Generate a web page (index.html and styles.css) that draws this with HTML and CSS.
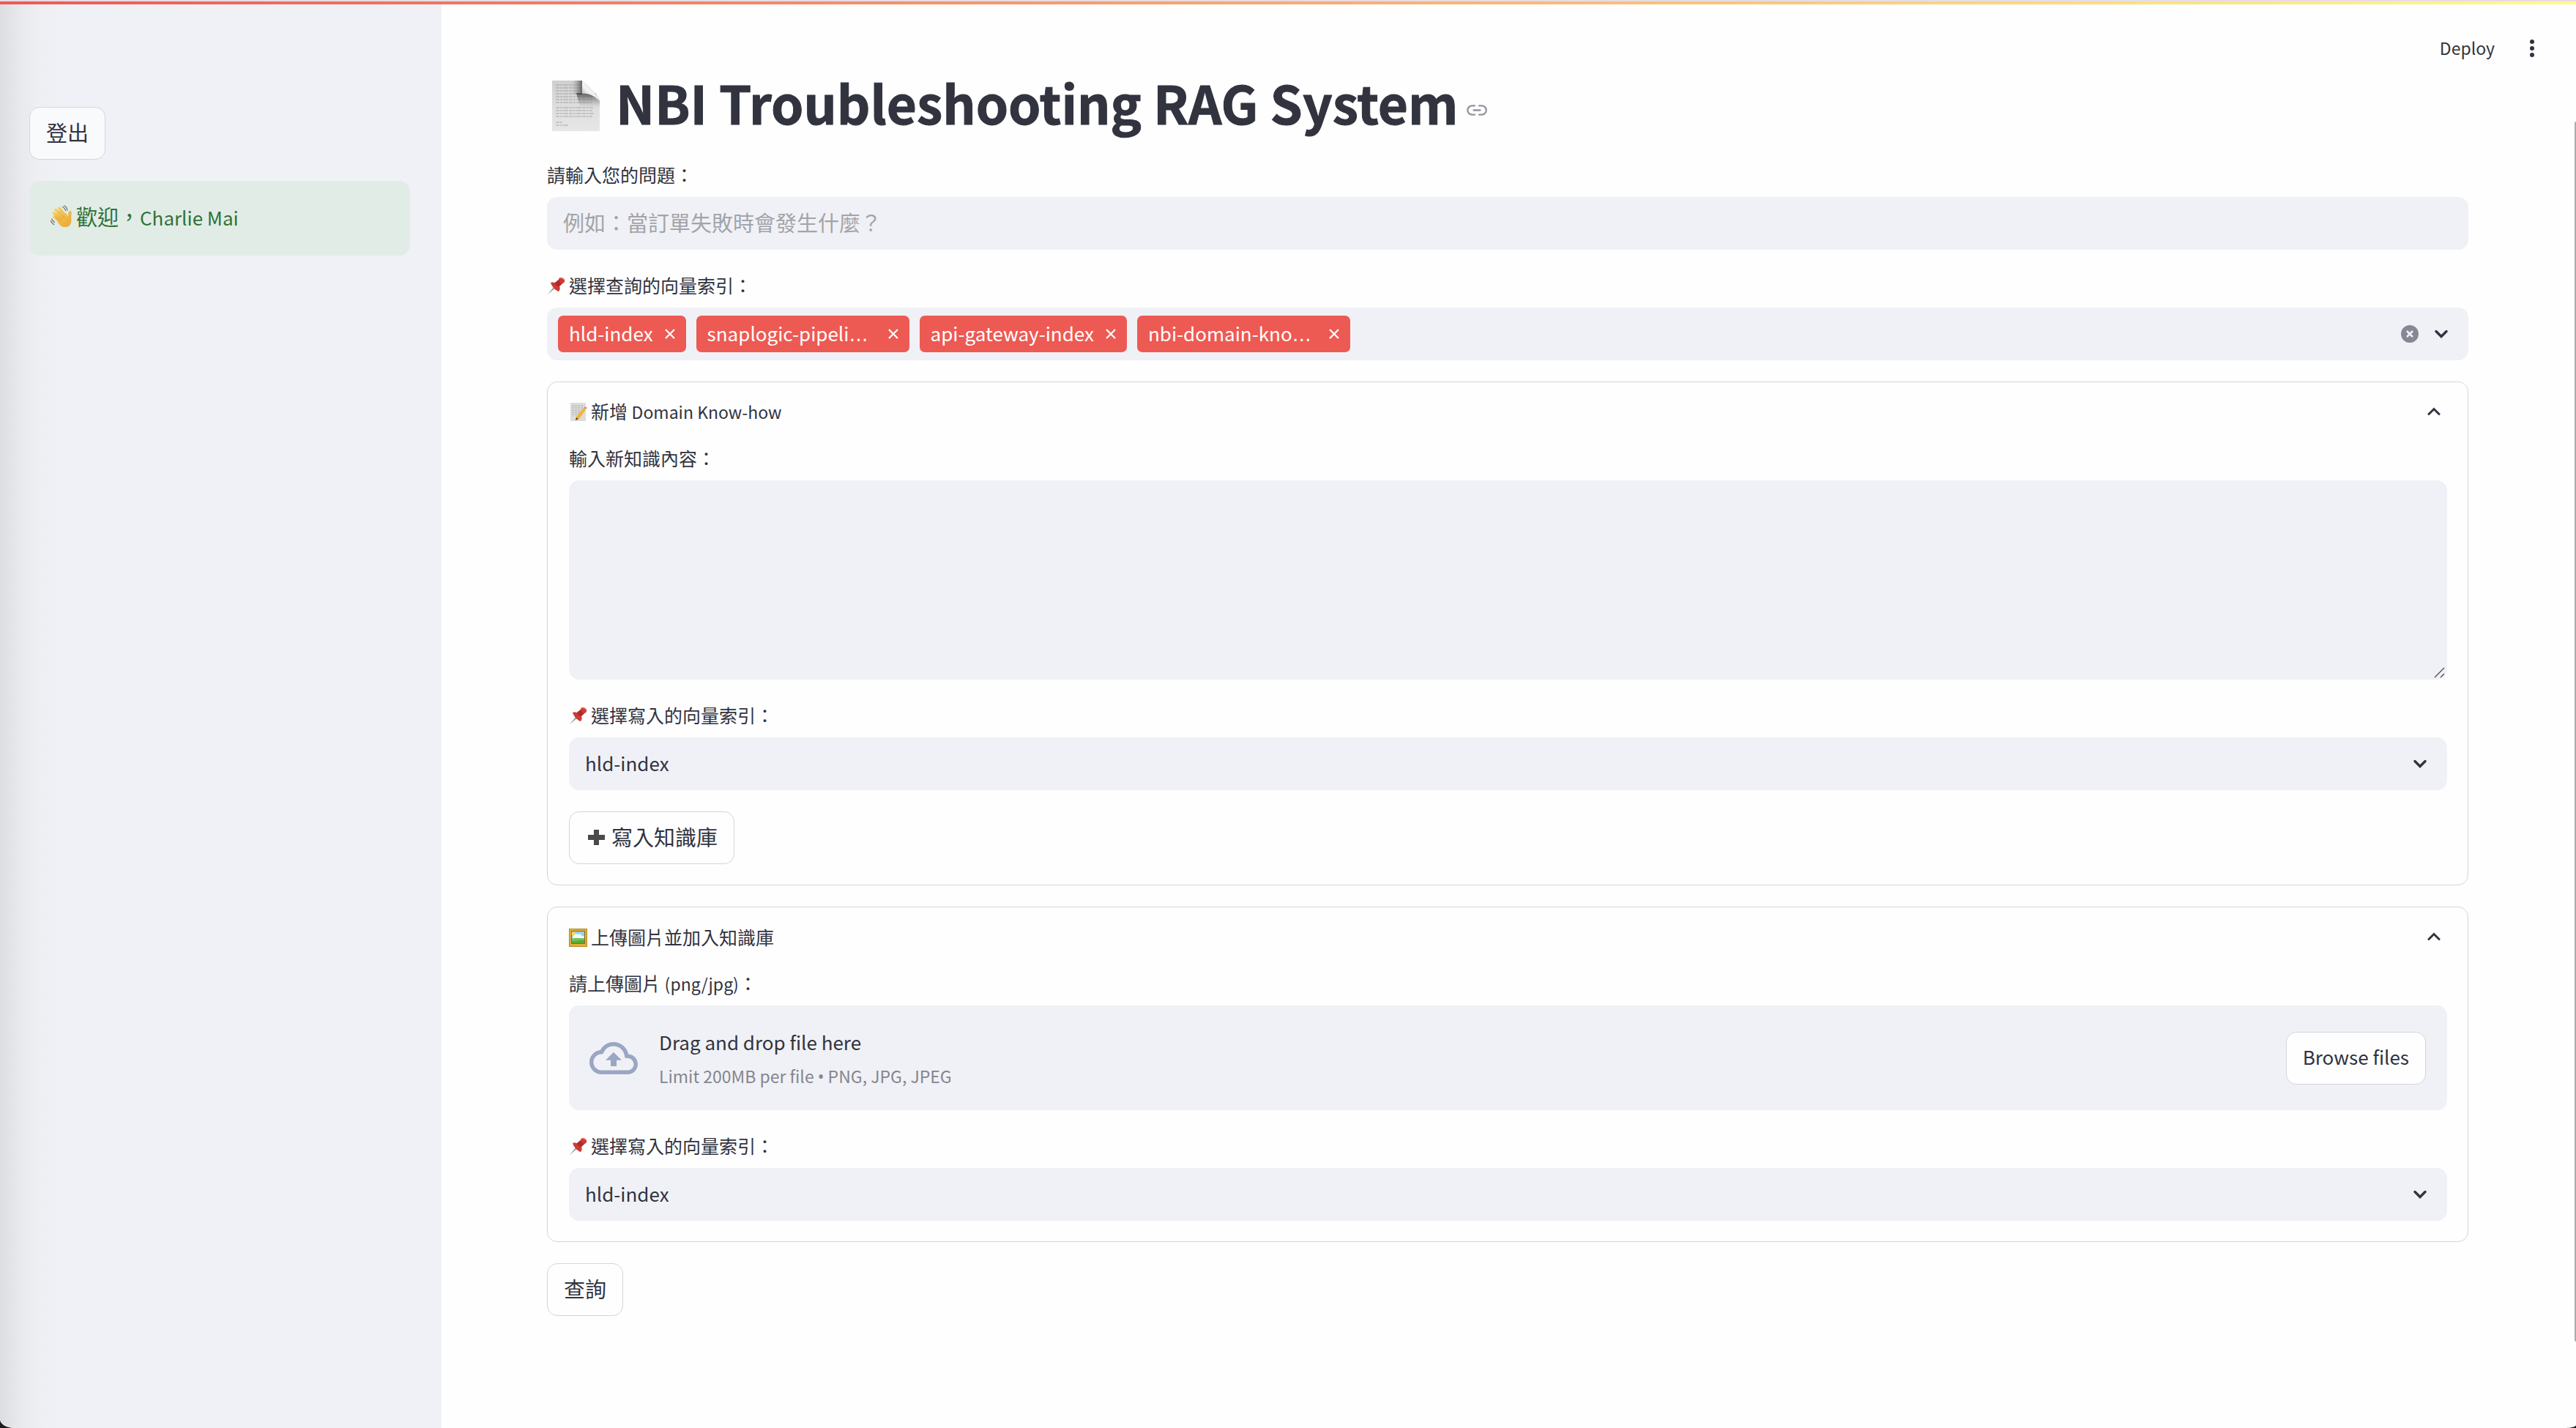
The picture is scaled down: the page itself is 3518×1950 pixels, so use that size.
FILE: index.html
```html
<!DOCTYPE html>
<html lang="zh-Hant">
<head>
<meta charset="utf-8">
<title>NBI Troubleshooting RAG System</title>
<link rel="stylesheet" href="styles.css">
</head>
<body>
<svg class="sprite" aria-hidden="true">
  <defs>
    <linearGradient id="paper" x1="0" y1="0" x2="0" y2="1"><stop offset="0" stop-color="#cfcfcf"/><stop offset=".5" stop-color="#dedede"/><stop offset="1" stop-color="#e6e6e6"/></linearGradient>
    <linearGradient id="fold" x1="48" y1="24" x2="62" y2="12" gradientUnits="userSpaceOnUse"><stop offset="0" stop-color="#bdbdbd"/><stop offset=".5" stop-color="#f4f4f4"/><stop offset="1" stop-color="#e2e2e2"/></linearGradient>
    <linearGradient id="shade-down" x1="0" y1="22" x2="0" y2="42" gradientUnits="userSpaceOnUse"><stop offset="0" stop-color="#333" stop-opacity=".75"/><stop offset="1" stop-color="#888" stop-opacity="0"/></linearGradient>
    <linearGradient id="shade-left" x1="48" y1="0" x2="34" y2="0" gradientUnits="userSpaceOnUse"><stop offset="0" stop-color="#333" stop-opacity=".7"/><stop offset="1" stop-color="#888" stop-opacity="0"/></linearGradient>
    <linearGradient id="hand" x1="0" y1="0" x2="29" y2="34" gradientUnits="userSpaceOnUse"><stop offset="0" stop-color="#ffd960"/><stop offset="1" stop-color="#e8a232"/></linearGradient>
  </defs>
  <symbol id="i-pin" viewBox="0 0 25 25">
    <path d="M1 24 10 13l2 2z" fill="#8fa0b0"/>
    <path d="M5 8c3-1 5 0 6 0l5-4c0-2 1-3 3-3 3 0 6 3 5 5 0 2-2 3-3 3l-4 4c1 2 1 5-1 7-4-1-9-6-11-12z" fill="#cf3a34"/>
    <path d="M11 8l5-4c1 3 3 5 5 5l-4 4c-3 0-6-2-6-5z" fill="#b02a2b"/>
    <path d="M17 2c2-1 5 0 6 2" stroke="#f0716a" stroke-width="1.500" fill="none"/>
  </symbol>
  <symbol id="i-memo" viewBox="0 0 25 25">
    <path d="M2 0h21v25H2z" fill="#dcdcda"/>
    <path d="M4 4h16M4 7h17M4 10h13M4 13h12M4 16h8" stroke="#aaa" stroke-width="1" stroke-dasharray="3 1"/>
    <path d="M20 7l3 2-9 13-5 2 1-5z" fill="#f2b632"/><path d="M20 7l2-2 3 2-2 2z" fill="#e58b8b"/><path d="M10 20l3 2-4 2z" fill="#5b4a32"/>
  </symbol>
  <symbol id="i-frame" viewBox="0 0 25 25">
    <path d="M0 0h25v25H0z" fill="#b88a1e"/><path d="M1 1h23v23H1z" fill="#dcb040"/><path d="M3 3h19v18H3z" fill="#8a6a1c"/>
    <path d="M4 4h17v16H4z" fill="#8fd3ef"/><circle cx="6" cy="7" r="2.500" fill="#ffd83a"/>
    <path d="M7 9c1-2 4-2 5-1 2-2 5 0 6 2 2 0 3 1 3 3H5c0-2 1-3 2-4z" fill="#f3fafc"/>
    <path d="M4 14c5-2 12 0 17-1v7H4z" fill="#79c14d"/><path d="M4 17c6 1 12-2 17-1v4H4z" fill="#5aa83a"/>
  </symbol>
  <symbol id="i-wave" viewBox="0 0 29 34">
    <path d="M5 17l9 8M4.500 12l11 11M7 7.500l11 12M12 5.500l9 11" fill="none" stroke="url(#hand)" stroke-width="3.600" stroke-linecap="round"/>
    <path d="M12 17l9-5 3 5c0-4 0-8 3-8 2 0 2 2 1.500 5-.5 4 .5 7-.5 11-1 4-4 6-8 6-4 .5-7-2-10-6z" fill="url(#hand)"/>
    <path d="M7 17l7 6.500M8 12.500l8.500 8.500M11 9l8.500 9.500" stroke="#c88824" stroke-width=".8" fill="none"/>
    <path d="M16 3c2 1 4 3 5 6M18.500 1.500c2 1 4 4 4.500 7M0 22c1 3 2 4 5 6M1.500 19.500c1 3 2 4 4.500 5.500" stroke="#6b6b6b" stroke-width="1.200" fill="none"/>
  </symbol>
  <symbol id="i-down" viewBox="0 0 18 12"><path d="M2 2.500l7 7 7-7" fill="none" stroke="currentColor" stroke-width="3.400" stroke-linecap="round"/></symbol>
  <symbol id="i-up" viewBox="0 0 18 12"><path d="M2 9.500l7-7 7 7" fill="none" stroke="currentColor" stroke-width="3" stroke-linecap="round"/></symbol>
  <symbol id="i-x" viewBox="0 0 14 14"><path d="M1 1l12 12M13 1 1 13" fill="none" stroke="currentColor" stroke-width="2.200"/></symbol>
</svg>

<div class="app">
  <div class="decoration"></div>
  <aside class="sidebar">
    <button class="btn" type="button">登出</button>
    <div class="alert" role="status"><svg class="emoji"><use href="#i-wave"/></svg><span>歡迎，<span class="latin">Charlie Mai</span></span></div>
  </aside>

  <div class="content">
    <header class="toolbar">
      <button class="deploy" type="button">Deploy</button>
      <button class="menu" type="button" aria-label="Menu"><svg viewBox="0 0 6 24"><circle cx="3" cy="3" r="3"/><circle cx="3" cy="12" r="3"/><circle cx="3" cy="21" r="3"/></svg></button>
    </header>

    <main class="stack page">
      <h1 class="title">
        <svg class="title-icon" viewBox="0 0 79 79" aria-hidden="true">
          <path d="M7 5h41l24 27v42H7z" fill="url(#paper)"/>
          <path d="M12 11h34M12 15h35M12 19h34M12 23h35M12 27h50M12 31h50M12 35h49M12 42h51M12 46h50M12 50h52M12 54h50M12 62h9M12 66h17" stroke="#8e8e8e" stroke-width="1.200" stroke-dasharray="5 1 3 1 7 1" opacity=".7"/>
          <path d="M34 5h14v19H34z" fill="url(#shade-left)"/>
          <path d="M40 22h26l6 10v12H46z" fill="url(#shade-down)"/>
          <path d="M48 5c7 4 22 20 24 29-5-7-14-12-24-11z" fill="url(#fold)"/>
        </svg>
        <span>NBI Troubleshooting RAG System</span>
        <a class="anchor" href="#" aria-label="Link to heading"><svg viewBox="0 0 28 15"><path d="M11 1.300H7.500a6.200 6.200 0 0 0 0 12.400H11M17 1.300h3.500a6.200 6.200 0 0 1 0 12.400H17M9.500 7.500h9" fill="none" stroke="currentColor" stroke-width="2.300" stroke-linecap="round"/></svg></a>
      </h1>

      <div class="field">
        <label class="label" for="question">請輸入您的問題：</label>
        <input class="control" id="question" type="text" placeholder="例如：當訂單失敗時會發生什麼？">
      </div>

      <div class="field">
        <label class="label" for="query-index"><svg class="emoji-sm"><use href="#i-pin"/></svg>選擇查詢的向量索引：</label>
        <div class="control multi">
          <span class="tag"><span class="tag-text">hld-index</span><button type="button" aria-label="Remove hld-index"><svg><use href="#i-x"/></svg></button></span>
          <span class="tag tag-cut"><span class="tag-text">snaplogic-pipeli<span class="dots">…</span></span><button type="button" aria-label="Remove snaplogic"><svg><use href="#i-x"/></svg></button></span>
          <span class="tag"><span class="tag-text">api-gateway-index</span><button type="button" aria-label="Remove api-gateway-index"><svg><use href="#i-x"/></svg></button></span>
          <span class="tag tag-cut"><span class="tag-text">nbi-domain-kno<span class="dots">…</span></span><button type="button" aria-label="Remove nbi-domain"><svg><use href="#i-x"/></svg></button></span>
          <input class="multi-input" id="query-index" type="text">
          <button class="clear" type="button" aria-label="Clear all"><svg viewBox="0 0 24 24"><circle cx="12" cy="12" r="12" fill="#858797"/><path d="M8 8l8 8M16 8l-8 8" stroke="#f0f1f6" stroke-width="2.500"/></svg></button>
          <svg class="chevron"><use href="#i-down"/></svg>
        </div>
      </div>

      <details class="expander" open>
        <summary class="summary"><span><svg class="emoji-sm"><use href="#i-memo"/></svg>新增 <span class="latin">Domain Know-how</span></span><svg class="chevron"><use href="#i-up"/></svg></summary>
        <div class="stack expander-body">
          <div class="field">
            <label class="label" for="knowledge">輸入新知識內容：</label>
            <div class="area-wrap"><textarea class="control area" id="knowledge"></textarea><svg class="grip" viewBox="0 0 15 15" aria-hidden="true"><path d="M1 14 14 1M9 14l5-5" stroke="#4b4c52" stroke-width="1.300"/></svg></div>
          </div>
          <div class="field">
            <label class="label" for="write-index"><svg class="emoji-sm"><use href="#i-pin"/></svg>選擇寫入的向量索引：</label>
            <div class="select-wrap"><select class="control" id="write-index"><option>hld-index</option></select><svg class="chevron"><use href="#i-down"/></svg></div>
          </div>
          <button class="btn" type="button"><svg class="plus" viewBox="0 0 29 29"><path d="M11 5h7v7h8v7h-8v7h-7v-7H3v-7h8z" fill="#4a4a4a"/></svg>寫入知識庫</button>
        </div>
      </details>

      <details class="expander" open>
        <summary class="summary"><span><svg class="emoji-sm"><use href="#i-frame"/></svg>上傳圖片並加入知識庫</span><svg class="chevron"><use href="#i-up"/></svg></summary>
        <div class="stack expander-body">
          <div class="field">
            <label class="label" for="upload">請上傳圖片 <span class="latin">(png/jpg)</span>：</label>
            <div class="dropzone">
              <svg class="cloud" viewBox="0 0 24 16"><path d="M19.350 6.040A7.490 7.490 0 0 0 12 0C9.110 0 6.600 1.640 5.350 4.040A5.994 5.994 0 0 0 0 10c0 3.310 2.690 6 6 6h13c2.760 0 5-2.240 5-5 0-2.640-2.050-4.780-4.650-4.960zM19 14H6c-2.210 0-4-1.790-4-4 0-2.050 1.530-3.760 3.560-3.970l1.070-.11.5-.95A5.469 5.469 0 0 1 12 2c2.620 0 4.880 1.860 5.390 4.430l.3 1.500 1.530.11A2.980 2.980 0 0 1 22 11c0 1.650-1.350 3-3 3zM8 9h2.550v3h2.900V9H16l-4-4z" fill="#9ba6c3"/></svg>
              <div class="drop-text"><span class="drop-title">Drag and drop file here</span><small class="drop-note">Limit 200MB per file <span class="bullet">•</span> PNG, JPG, JPEG</small></div>
              <input class="file" id="upload" type="file" accept=".png,.jpg,.jpeg">
              <button class="btn btn-latin" type="button">Browse files</button>
            </div>
          </div>
          <div class="field">
            <label class="label" for="image-index"><svg class="emoji-sm"><use href="#i-pin"/></svg>選擇寫入的向量索引：</label>
            <div class="select-wrap"><select class="control" id="image-index"><option>hld-index</option></select><svg class="chevron"><use href="#i-down"/></svg></div>
          </div>
        </div>
      </details>

      <button class="btn" type="button">查詢</button>
    </main>
  </div>
  <div class="scroll-thumb"></div>
</div>
</body>
</html>
```
FILE: styles.css
```css
:root {
  --text: #31333f;
  --field: #f0f1f6;
  --line: #d5d6d9;
  --gap: 29px;
  --cjk: 29px;
  --latin: 26px;
  --cjk-sm: 25px;
  --latin-sm: 23px;
}

* { box-sizing: border-box; }

body {
  margin: 0;
  background: #1c1c1e;
  color: var(--text);
  font-family: "Noto Sans CJK TC", "Noto Sans", sans-serif;
  font-size: var(--cjk);
}

button, input, select, textarea { font: inherit; color: inherit; }
button { cursor: pointer; }

.sprite { position: absolute; width: 0; height: 0; }

.app {
  position: relative;
  display: flex;
  min-height: 100vh;
  overflow: hidden;
  background: #fefefe;
  border-radius: 0 0 14px 20px / 0 0 4px 12px;
}

.decoration {
  position: absolute;
  inset: 0 0 auto;
  height: 6px;
  border-top: 2px solid #e8dbe6;
  background: linear-gradient(90deg, #ec5a55, #fffb8c);
}

.sidebar {
  display: flex;
  flex: none;
  flex-direction: column;
  align-items: flex-start;
  gap: var(--gap);
  width: 603px;
  padding: 146px 43px 40px 40px;
  background: linear-gradient(90deg, #dddee1, #e8e9ed 28px, #eeeff3 52px, var(--field) 84px);
}

.alert {
  display: flex;
  align-items: center;
  align-self: stretch;
  gap: 6px;
  min-height: 101px;
  padding: 27px 29px 31px;
  border-radius: 14px;
  background: #e2ece6;
  color: #2f7338;
  line-height: 43px;
}

.alert .latin { font-size: var(--latin); }
.latin { font-size: var(--latin-sm); }

.emoji { flex: none; width: 29px; height: 34px; }
.emoji-sm { width: 25px; height: 25px; margin-right: 5px; vertical-align: -3px; }

.btn {
  display: inline-flex;
  align-items: center;
  align-self: flex-start;
  height: 72px;
  padding: 0 22px 4px;
  border: 1px solid var(--line);
  border-radius: 14px;
  background: #fefefe;
  line-height: 46px;
}

.sidebar .btn { background: #f9fafc; }
.btn-latin { align-self: center; font-size: var(--latin); }
.plus { width: 29px; height: 29px; margin-right: 6px; }

.content { flex: 1; min-width: 0; }

.toolbar {
  display: flex;
  align-items: center;
  justify-content: flex-end;
  gap: 48px;
  height: 88px;
  padding: 44px 57px 0 0;
}

.deploy, .menu { padding: 0; border: 0; background: none; }
.deploy { padding-bottom: 2px; font-size: var(--latin-sm); line-height: 40px; }
.menu svg { display: block; width: 6px; height: 24px; fill: var(--text); }

.page { padding: 0 147px 144px 144px; }
.stack { display: flex; flex-direction: column; gap: var(--gap); }

.title {
  display: flex;
  align-items: center;
  gap: 15px;
  margin: 0;
  font-size: 71px;
  font-weight: 700;
  line-height: 102px;
  -webkit-text-stroke: 1px currentColor;
}

.title-icon { flex: none; width: 79px; height: 79px; margin-top: 10px; }
.anchor { display: flex; margin: 22px 0 0 -3px; color: #93949c; }
.anchor svg { width: 28px; height: 15px; }

.field { display: flex; flex-direction: column; gap: 7px; }
.label { height: 43px; font-size: var(--cjk-sm); line-height: 39px; }

.control {
  width: 100%;
  height: 72px;
  padding: 0 22px 4px;
  border: 0;
  border-radius: 14px;
  outline: 0;
  background: var(--field);
}

.control::placeholder { color: #a3a4a9; opacity: 1; }

.area-wrap { display: grid; }
.area-wrap > * { grid-area: 1 / 1; }
.area { display: block; height: 272px; padding: 22px; resize: vertical; }
.area::-webkit-resizer { background: none; }
.grip { align-self: end; justify-self: end; width: 15px; height: 15px; margin: 0 3px 2px 0; pointer-events: none; }

.multi { display: flex; align-items: center; gap: 14px; padding: 0 28px 0 15px; }

.tag {
  display: flex;
  align-items: center;
  justify-content: space-between;
  gap: 16px;
  height: 50px;
  padding: 0 15px;
  border-radius: 7px;
  background: #ed5a53;
  color: #fff;
  font-size: var(--latin);
  line-height: 48px;
}

.tag-cut { width: 291px; }
.tag button { display: flex; padding: 0; border: 0; background: none; }
.tag svg { width: 14px; height: 14px; }
.tag-text { height: 50px; }
.dots { font-family: "DejaVu Sans", sans-serif; }
.bullet { font-family: "Noto Sans", sans-serif; }

.multi-input { flex: 1; min-width: 0; height: 50px; padding: 0; border: 0; outline: 0; background: none; }
.clear { display: flex; margin-right: 8px; padding: 0; border: 0; background: none; }
.clear svg { width: 24px; height: 24px; }

.chevron { flex: none; width: 18px; height: 12px; }

.select-wrap { display: grid; align-items: center; }
.select-wrap > * { grid-area: 1 / 1; }
.select-wrap .chevron { justify-self: end; margin-right: 28px; pointer-events: none; }
select.control { appearance: none; font-size: var(--latin); }

.expander { border: 1px solid var(--line); border-radius: 14px; }

.summary {
  display: flex;
  align-items: center;
  justify-content: space-between;
  height: 84px;
  padding: 0 37px 5px 29px;
  font-size: var(--cjk-sm);
  line-height: 40px;
  list-style: none;
  cursor: pointer;
}

.expander-body { padding: 0 28px 28px 29px; }

.dropzone {
  display: flex;
  align-items: center;
  min-height: 143px;
  padding: 0 29px 0 28px;
  border-radius: 14px;
  background: var(--field);
}

.cloud { flex: none; width: 66px; height: 44px; }
.drop-text { display: flex; flex: 1; flex-direction: column; gap: 3px; margin-left: 29px; }
.drop-title { font-size: var(--latin); line-height: 46px; }
.drop-note { color: #85868e; font-size: var(--latin-sm); line-height: 40px; }
.file { position: absolute; width: 1px; height: 1px; opacity: 0; }

.scroll-thumb {
  position: absolute;
  top: 166px;
  right: 0;
  bottom: 118px;
  width: 2px;
  border-radius: 2px 0 0 2px;
  background: #acacb2;
}
```
